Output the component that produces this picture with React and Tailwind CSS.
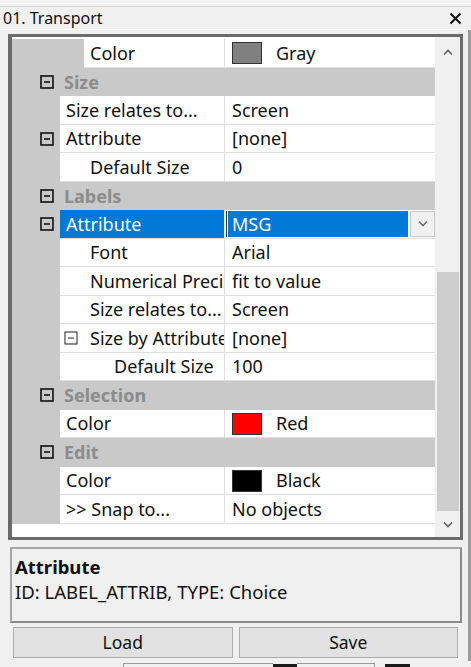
import React from 'react';

const Expander = ({ thin }) => (
  <svg width="14" height="14" viewBox="0 0 14 14" className="shrink-0">
    <rect x="1" y="1" width="12" height="12" fill="none" stroke="#1c1c1c" strokeWidth={thin ? 1 : 1.7} />
    <line x1="4" y1="7" x2="10" y2="7" stroke="#1c1c1c" strokeWidth={thin ? 1 : 1.7} />
  </svg>
);

const Chevron = ({ down, color = '#5f5f5f', w = 10 }) => (
  <svg width={w} height="7" viewBox="0 0 10 7">
    <polyline
      points={down ? '1,1.5 5,5.5 9,1.5' : '1,5.5 5,1.5 9,5.5'}
      fill="none"
      stroke={color}
      strokeWidth="1.6"
    />
  </svg>
);

const Swatch = ({ color, name }) => (
  <div className="flex items-center">
    <div className={`w-[30px] h-[22px] border border-[#333] ${color}`} />
    <span className="ml-[14px]">{name}</span>
  </div>
);

const Category = ({ label }) => (
  <div className="flex items-center h-[28.5px] bg-[#c9c9c9]">
    <div className="w-[48px] flex justify-end pr-[6px]">
      <Expander />
    </div>
    <span className="ml-[4px] pt-[1px] font-bold text-[#8c8c8c]">{label}</span>
  </div>
);

const Prop = ({ gutter = 'w-[48px]', expander, subExpander, textPad = 'pl-[6px]', label, children }) => (
  <div className="flex h-[28.5px]">
    <div className={`${gutter} shrink-0 bg-[#c9c9c9] flex items-center justify-end pr-[6px]`}>
      {expander && <Expander />}
    </div>
    <div className={`flex-1 min-w-0 bg-white border-b border-[#dedede] flex items-center overflow-hidden whitespace-nowrap pt-[1px] ${textPad}`}>
      {subExpander && (
        <span className="mr-[12px] -ml-[2px]">
          <Expander thin />
        </span>
      )}
      <span className="overflow-hidden">{label}</span>
    </div>
    <div className="w-[1px] shrink-0 bg-[#dedede]" />
    <div className="w-[210px] shrink-0 bg-white border-b border-[#dedede] flex items-center pl-[7px] pt-[1px] whitespace-nowrap overflow-hidden">
      {children}
    </div>
  </div>
);

const SelectedProp = () => (
  <div className="flex h-[28.5px]">
    <div className="w-[48px] shrink-0 bg-[#c9c9c9] flex items-center justify-end pr-[6px]">
      <Expander />
    </div>
    <div className="flex-1 min-w-0 bg-[#0078d7] text-white border-b border-[#dedede] flex items-center pl-[6px] pt-[1px]">
      Attribute
    </div>
    <div className="w-[1px] shrink-0 bg-[#dedede]" />
    <div className="w-[210px] shrink-0 bg-white border-b border-[#dedede] flex items-center pl-[1px] py-[1px]">
      <div className="w-[1px] h-full bg-[#333]" />
      <div className="w-[181px] h-full bg-[#0078d7] text-white flex items-center pl-[4px] pt-[1px] ml-[1px]">MSG</div>
      <div className="ml-[2px] w-[25px] h-full bg-[#f0f0f0] border border-[#c6c6c6] flex items-center justify-center">
        <Chevron down color="#707070" w={10} />
      </div>
    </div>
  </div>
);

export default function App() {
  return (
    <div className="w-[471px] h-[667px] bg-[#f0f0f0] flex flex-col overflow-hidden font-['Noto_Sans','Open_Sans',sans-serif] text-[18px] text-[#111]">
      <div className="h-[7px] shrink-0 border-b border-[#d6d6d6] bg-[#f3f3f3]" />
      <div className="flex flex-1 min-h-0">
        <div className="w-[468px] shrink-0 flex flex-col">
          <div className="h-[22px] shrink-0 flex items-center justify-between pl-[3px] pr-[6px] text-[16px]">
            <span>01. Transport</span>
            <svg width="13" height="13" viewBox="0 0 13 13">
              <path d="M1.5 1.5 L11.5 11.5 M11.5 1.5 L1.5 11.5" stroke="#111" strokeWidth="2" />
            </svg>
          </div>
          <div className="h-[1px] bg-[#fdfdfd] mr-[2px]" />
          <div className="h-[4px]" />

          <div className="ml-[8px] w-[455px] h-[506px] shrink-0 border-l-4 border-t-[3px] border-r-[3px] border-b-[3px] border-[#6b6b6b] flex bg-white">
            <div className="w-[423px] shrink-0 flex flex-col pt-[2px]">
              <Prop gutter="w-[72px]" label="Color">
                <Swatch color="bg-[#808080]" name="Gray" />
              </Prop>
              <Category label="Size" />
              <Prop label="Size relates to...">Screen</Prop>
              <Prop expander label="Attribute">[none]</Prop>
              <Prop textPad="pl-[30px]" label="Default Size">0</Prop>
              <Category label="Labels" />
              <SelectedProp />
              <Prop textPad="pl-[30px]" label="Font">Arial</Prop>
              <Prop textPad="pl-[30px]" label="Numerical Precision">fit to value</Prop>
              <Prop textPad="pl-[30px]" label="Size relates to...">Screen</Prop>
              <Prop textPad="pl-[6px]" subExpander label="Size by Attribute">[none]</Prop>
              <Prop textPad="pl-[54px]" label="Default Size">100</Prop>
              <Category label="Selection" />
              <Prop label="Color">
                <Swatch color="bg-[#ff0000]" name="Red" />
              </Prop>
              <Category label="Edit" />
              <Prop label="Color">
                <Swatch color="bg-black" name="Black" />
              </Prop>
              <Prop label=">> Snap to...">No objects</Prop>
            </div>
            <div className="flex-1 bg-[#f0f0f0] flex flex-col items-center">
              <div className="h-[28px] flex items-center justify-center pt-[2px]">
                <Chevron color="#606060" />
              </div>
              <div className="h-[207px]" />
              <div className="w-[22px] h-[239px] bg-[#cdcdcd]" />
              <div className="flex-1 flex items-center justify-center">
                <Chevron down color="#606060" />
              </div>
            </div>
          </div>

          <div className="h-[7px]" />
          <div className="ml-[10px] w-[452px] h-[76px] shrink-0 border-2 border-[#8a8a8a] border-t-[#a5a5a5] border-l-[#a5a5a5] px-[3px] pt-[7px]">
            <div className="font-bold text-[18.5px] leading-[22px]">Attribute</div>
            <div className="text-[18.5px] leading-[28px] whitespace-nowrap">ID: LABEL_ATTRIB, TYPE: Choice</div>
          </div>
          <div className="h-[4px]" />
          <div className="flex h-[31px] shrink-0 ml-[13px] w-[445px] gap-[6px]">
            <button className="flex-1 bg-[#e1e1e1] border border-[#adadad] text-[17.5px] text-[#111]">Load</button>
            <button className="flex-1 bg-[#e1e1e1] border border-[#adadad] text-[17.5px] text-[#111]">Save</button>
          </div>
          <div className="flex-1 flex items-end">
            <div className="ml-[123px] h-[4px] w-[150px] border-t border-l border-[#9a9a9a]" />
            <div className="h-[3px] w-[24px] bg-[#1a1a1a]" />
            <div className="h-[4px] w-[78px] border-t border-r border-[#9a9a9a]" />
            <div className="ml-[10px] h-[3px] w-[25px] bg-[#1a1a1a]" />
          </div>
        </div>
        <div className="w-[3px] bg-[#9c9c9c] mt-[23px] mb-[6px]" />
      </div>
    </div>
  );
}
